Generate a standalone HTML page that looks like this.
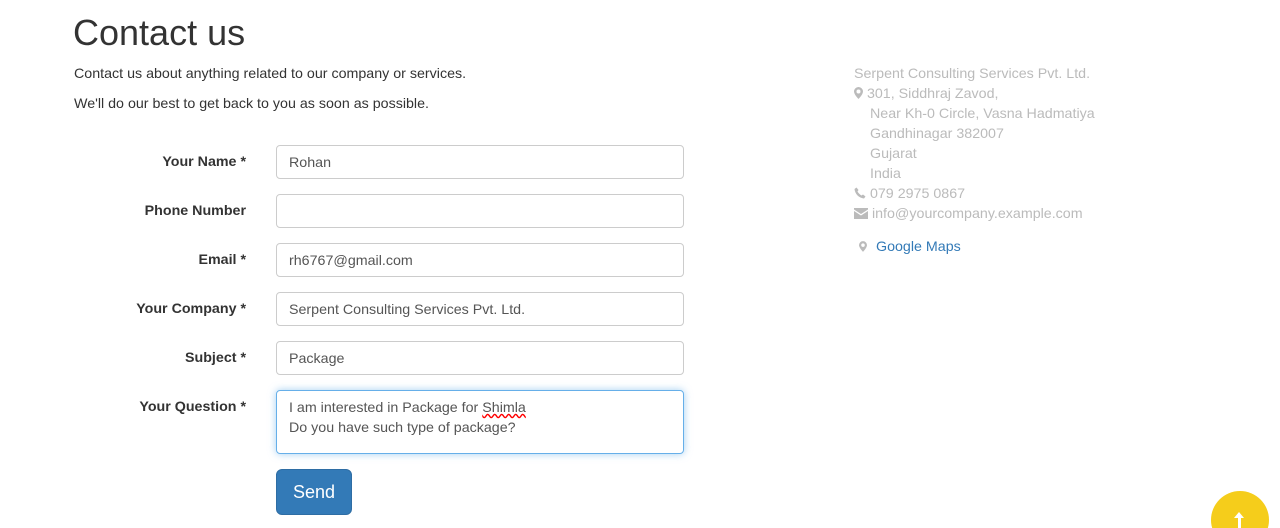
<!DOCTYPE html>
<html><head><meta charset="utf-8"><style>
html,body{margin:0;width:1280px;height:528px;overflow:hidden}
body{background:#fff;font-family:"Liberation Sans",sans-serif;color:#333;font-size:14.25px;position:relative}
.a{position:absolute}
h1{position:absolute;left:73px;top:12px;margin:0;font-size:36px;font-weight:400;line-height:42px;color:#333}
.lbl{position:absolute;width:246px;left:0;text-align:right;font-weight:bold;line-height:20px}
.in{position:absolute;left:276px;height:32px;border:1px solid #ccc;border-radius:4px;line-height:34px;padding-left:12px;width:394px;color:#555}
.r{color:#bbb;position:absolute;left:854px;line-height:20px;white-space:nowrap}
svg{vertical-align:-1px}
</style></head><body>
<h1>Contact us</h1>
<div class="a" style="left:74px;top:64px;line-height:20px">Contact us about anything related to our company or services.</div>
<div class="a" style="left:74px;top:94px;line-height:20px">We'll do our best to get back to you as soon as possible.</div>

<div class="lbl" style="top:152px">Your Name *</div>
<div class="in" style="top:145px">Rohan</div>
<div class="lbl" style="top:201px">Phone Number</div>
<div class="in" style="top:194px"></div>
<div class="lbl" style="top:250px">Email *</div>
<div class="in" style="top:243px">rh6767@gmail.com</div>
<div class="lbl" style="top:299px">Your Company *</div>
<div class="in" style="top:292px">Serpent Consulting Services Pvt. Ltd.</div>
<div class="lbl" style="top:348px">Subject *</div>
<div class="in" style="top:341px">Package</div>
<div class="lbl" style="top:397px">Your Question *</div>
<div class="in" style="top:390px;line-height:20px;padding-top:7px;height:55px;border-color:#66afe9;box-shadow:0 0 8px rgba(102,175,233,.6)">I am interested in Package for <span style="text-decoration:underline wavy red">Shimla</span><br>Do you have such type of package?</div>
<div class="a" style="left:276px;top:469px;width:76px;height:46px;background:#337ab7;border:1px solid #2e6da4;box-sizing:border-box;border-radius:6px;color:#fff;font-size:18px;line-height:44px;text-align:center">Send</div>

<div class="r" style="top:64px">Serpent Consulting Services Pvt. Ltd.</div>
<div class="r" style="top:84px"><svg width="9" height="12" viewBox="0 0 9 12"><path d="M4.5 0A4.5 4.5 0 0 0 0 4.5C0 7.5 4.5 12 4.5 12S9 7.5 9 4.5A4.5 4.5 0 0 0 4.5 0zm0 2.5a2 2 0 1 1 0 4 2 2 0 0 1 0-4z" fill="#bbb"/></svg> 301, Siddhraj Zavod,</div>
<div class="r" style="top:104px;left:870px">Near Kh-0 Circle, Vasna Hadmatiya</div>
<div class="r" style="top:124px;left:870px">Gandhinagar 382007</div>
<div class="r" style="top:144px;left:870px">Gujarat</div>
<div class="r" style="top:164px;left:870px">India</div>
<div class="r" style="top:184px"><svg width="12" height="12" viewBox="0 0 12 12"><path d="M2.5 0.5L4.5 3 3.5 4.5C4.3 6 6 7.7 7.5 8.5L9 7.5 11.5 9.5 10 11.5C5 11 1 7 0.5 2z" fill="#bbb"/></svg> 079 2975 0867</div>
<div class="r" style="top:204px"><svg width="14" height="11" viewBox="0 0 14 11"><path d="M0 0h14v1.5L7 6 0 1.5zM0 3l7 4.5L14 3v8H0z" fill="#bbb"/></svg> info@yourcompany.example.com</div>
<div class="r" style="top:237px;left:859px"><svg width="8" height="11" viewBox="0 0 9 12"><path d="M4.5 0A4.5 4.5 0 0 0 0 4.5C0 7.5 4.5 12 4.5 12S9 7.5 9 4.5A4.5 4.5 0 0 0 4.5 0zm0 2.5a2 2 0 1 1 0 4 2 2 0 0 1 0-4z" fill="#bbb"/></svg></div>
<div class="r" style="top:237px;left:876px;color:#337ab7">Google Maps</div>

<div class="a" style="left:1211px;top:491px;width:58px;height:58px;border-radius:50%;background:#f5cd1b"></div>
<div class="a" style="left:1238px;top:516px;width:3px;height:14px;background:#fff"></div>
<div class="a" style="left:1234px;top:512px;width:0;height:0;border-left:5px solid transparent;border-right:5px solid transparent;border-bottom:6px solid #fff"></div>
</body></html>
